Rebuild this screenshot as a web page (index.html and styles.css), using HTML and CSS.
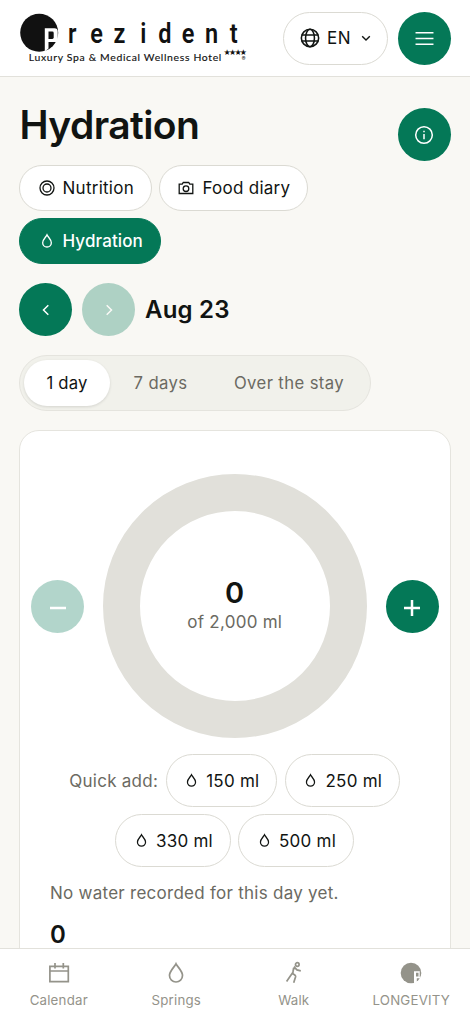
FILE: index.html
```html
<!DOCTYPE html>
<html lang="en">
<head>
<meta charset="utf-8">
<meta name="viewport" content="width=device-width, initial-scale=1">
<title>Hydration</title>
<link rel="stylesheet" href="styles.css">
</head>
<body>
<svg class="defs" width="0" height="0" aria-hidden="true">
  <symbol id="drop" viewBox="0 0 24 24"><path d="M12 2.800C10.500 6 5.500 9.900 5.500 14.500a6.500 6.500 0 0 0 13 0C18.500 9.900 13.500 6 12 2.800z"/></symbol>
</svg>
<header class="topbar">
  <svg class="logo" width="240" height="60" viewBox="10 5 240 60" role="img" aria-label="Prezident">
    <circle cx="39.200" cy="32.700" r="19"/>
    <path class="logo-cut" d="M44.800 28.200h9.700q3.200 0 3.200 3.200v7.500q0 3.200-3.200 3.200h-6v6.400l-3.700 3z"/>
    <path d="M48.500 31.500h3.800q1.400 0 1.400 1.400v4.600q0 1.400-1.400 1.400h-3.800z"/>
    <text class="logo-name" transform="scale(.84 1)" x="81 107.500 135 167 188.500 216.500 244 273.500" y="43.200">rezident</text>
    <text class="logo-tag" x="28.800" y="60.800" textLength="192.500" lengthAdjust="spacing">Luxury Spa &amp; Medical Wellness Hotel</text>
    <text class="logo-stars" x="223.500" y="55.400" textLength="23.500" lengthAdjust="spacing">★★★★</text>
    <text class="logo-reg" x="241.800" y="61.300">®</text>
  </svg>
  <button class="lang">
    <svg class="icon globe" viewBox="0 0 18 18"><circle cx="9" cy="9" r="7.800"/><ellipse cx="9" cy="9" rx="4" ry="7.800"/><path d="M1.500 6.300h15M1.500 11.700h15"/></svg>
    <span>EN</span>
    <svg class="icon chev" viewBox="0 0 10 10"><path d="M1.200 3.200 5 7l3.800-3.800"/></svg>
  </button>
  <button class="round">
    <svg class="icon menu" viewBox="0 0 18 14"><path d="M.5 1.500h17M.5 7h17M.5 12.500h17"/></svg>
  </button>
</header>
<main class="page">
  <div class="heading">
    <h1>Hydration</h1>
    <button class="round info"><svg class="icon" width="20" height="20" viewBox="0 0 20 20"><circle cx="10" cy="10" r="8.300"/><path d="M10 9v5.300M10 5.700v1.500"/></svg></button>
  </div>
  <nav class="tabs">
    <a class="tab"><svg class="icon" width="16" height="16" viewBox="0 0 16 16"><circle cx="8" cy="8" r="7"/><circle cx="8" cy="8" r="4"/></svg>Nutrition</a>
    <a class="tab"><svg class="icon" width="16" height="16" viewBox="0 0 16 16"><path d="M1.200 4.200h3L5.300 2.500h5.400l1.100 1.700h3v9.300H1.200z"/><circle cx="8" cy="8.700" r="2.800"/></svg>Food diary</a>
    <a class="tab active"><svg class="icon drop" width="16" height="16"><use href="#drop"/></svg>Hydration</a>
  </nav>
  <div class="daynav">
    <button class="round"><svg class="icon arrow" viewBox="0 0 12 12"><path d="M8.300 1.300 3.500 6l4.800 4.700"/></svg></button>
    <button class="round off"><svg class="icon arrow" viewBox="0 0 12 12"><path d="M3.700 1.300 8.500 6l-4.800 4.700"/></svg></button>
    <h2>Aug 23</h2>
  </div>
  <div class="range">
    <span class="seg on">1 day</span><span class="seg">7 days</span><span class="seg">Over the stay</span>
  </div>
  <section class="card">
    <div class="meter">
      <button class="round off"><svg class="icon sign" viewBox="0 0 16 16"><path d="M0 8h16"/></svg></button>
      <div class="ring"><strong>0</strong><span>of 2,000 ml</span></div>
      <button class="round"><svg class="icon sign" viewBox="0 0 16 16"><path d="M0 8h16M8 0v16"/></svg></button>
    </div>
    <div class="quick">
      <span class="label">Quick add:</span>
      <button class="chip"><svg class="icon drop" width="15" height="15"><use href="#drop"/></svg>150 ml</button>
      <button class="chip"><svg class="icon drop" width="15" height="15"><use href="#drop"/></svg>250 ml</button>
      <button class="chip"><svg class="icon drop" width="15" height="15"><use href="#drop"/></svg>330 ml</button>
      <button class="chip"><svg class="icon drop" width="15" height="15"><use href="#drop"/></svg>500 ml</button>
    </div>
    <p class="empty">No water recorded for this day yet.</p>
    <strong class="total">0</strong>
  </section>
</main>
<nav class="bottombar">
  <a><svg class="icon" width="24" height="24" viewBox="0 0 24 24"><path d="M2.900 5.300h18.400v15.400H2.900zM2.900 10h18.400M8 2v5.500M16.300 2v5.500"/></svg>Calendar</a>
  <a><svg class="icon" width="24" height="24"><use href="#drop"/></svg>Springs</a>
  <a><svg class="icon" width="24" height="24" viewBox="0 0 24 24"><circle cx="15.300" cy="3.500" r="1.800"/><path d="M18.800 9.800 15 8.900 12.500 6.300 10.800 10.500M11.600 6.800l-.8 5.700M4.600 20.500 8 15.500l2.300-3.300 3 2.300q.5.500.3 1.300l-1.900 6"/></svg>Walk</a>
  <a><svg width="24" height="24" viewBox="0 0 24 24"><circle cx="12" cy="12" r="10.300" fill="#94938a"/><path fill="#fff" d="M15 10.200h6.500v7h-3.700v4.600L15 22z"/><path fill="#94938a" d="M17 11.800h2.500v3.700H17zM20.700 10.200h1.300v4l-1.300 2z"/></svg>LONGEVITY</a>
</nav>
</body>
</html>
```
FILE: styles.css
```css
* { box-sizing: border-box; }
html, body { height: 100%; }
body {
  margin: 0;
  height: 1017px;
  display: flex;
  flex-direction: column;
  overflow: hidden;
  background: #f9f8f4;
  color: #111412;
  font-family: Inter, "Liberation Sans", sans-serif;
  font-size: 17px;
  letter-spacing: 0.26px;
}
button { font: inherit; letter-spacing: inherit; color: inherit; padding: 0; }
h1, h2, p { margin: 0; }
.defs { position: absolute; }
.icon { fill: none; stroke: currentColor; stroke-width: 1.5; flex: none; }
.tab .icon { stroke-width: 1.3; }
.icon.drop { stroke-width: 2; }

.topbar {
  flex: none;
  height: 77px;
  padding: 0 19px 0 10px;
  display: flex;
  align-items: center;
  background: #fff;
  border-bottom: 1px solid #e2e1db;
}
.logo { flex: none; margin: -7px auto 0 0; fill: #111; }
.logo-cut { fill: #fff; }
.logo-name { font: 600 28px Roboto, sans-serif; letter-spacing: 0; }
.logo-tag { font: 400 10.400px Lato, sans-serif; letter-spacing: 0; stroke: #111; stroke-width: 0.15px; }
.logo-stars { font: 8px "DejaVu Sans", sans-serif; letter-spacing: 0; }
.logo-reg { font: 5.500px Inter, sans-serif; letter-spacing: 0; }
.lang {
  width: 105px;
  height: 53px;
  margin-right: 10px;
  display: flex;
  align-items: center;
  padding-left: 16px;
  background: #fff;
  border: 1px solid #dbdad3;
  border-radius: 27px;
}
.lang span { margin: 0 10px 0 7px; font-size: 17px; letter-spacing: 0.5px; }
.globe { width: 20px; height: 20px; stroke-width: 1.4; }
.chev { width: 10px; height: 10px; stroke-width: 1.4; }
.menu { width: 19px; height: 15px; stroke-width: 1.5; }
.round {
  flex: none;
  width: 53px;
  height: 53px;
  display: grid;
  place-items: center;
  border: 0;
  border-radius: 50%;
  background: #047857;
  color: #fff;
}
.off { opacity: 0.3; }
.arrow { width: 12px; height: 12px; stroke-width: 1.5; }

.page { flex: 1; min-height: 0; overflow: hidden; padding: 24px 19.500px 0 19px; }
.heading { display: flex; justify-content: space-between; height: 64px; }
h1 { margin-left: 0.500px; font-size: 39px; line-height: 47px; font-weight: 600; letter-spacing: -0.6px; }
.info { margin-top: 7px; }
.tabs { display: flex; flex-wrap: wrap; gap: 7px 7px; width: 330px; }
.tab {
  height: 46px;
  display: flex;
  align-items: center;
  gap: 8px;
  padding: 0 17px 0 18.500px;
  background: #fff;
  border: 1px solid #dbdad3;
  border-radius: 23px;
}
.active { background: #047857; border-color: #047857; color: #fff; font-weight: 500; letter-spacing: 0.1px; }
.daynav { display: flex; align-items: center; gap: 10px; margin-top: 19px; }
h2 { font-size: 24px; font-weight: 600; letter-spacing: 0.2px; }
.range {
  display: flex;
  width: 352px;
  height: 56px;
  margin-top: 19px;
  padding: 4px;
  background: #f1f1eb;
  border: 1px solid #e5e4de;
  border-radius: 28px;
  color: #6b6a62;
}
.seg {
  flex: none;
  display: grid;
  place-items: center;
  padding: 0 23px 0 23.500px;
  border-radius: 23px;
  font-size: 16.700px;
  letter-spacing: 0.38px;
  white-space: nowrap;
}
.on { width: 86px; padding: 0; background: #fff; color: #111412; letter-spacing: 0.2px; box-shadow: 0 1px 3px rgba(0, 0, 0, 0.12); }

.card {
  height: 620px;
  margin-top: 19px;
  padding: 43px 11px 0;
  background: #fff;
  border: 1px solid #e5e4de;
  border-radius: 20px;
}
.meter { display: flex; align-items: center; justify-content: space-between; }
.ring {
  width: 264px;
  height: 264px;
  display: flex;
  flex-direction: column;
  align-items: center;
  justify-content: center;
  padding-bottom: 2px;
  border: 37px solid #e1e0da;
  border-radius: 50%;
}
.ring strong { font-size: 29px; line-height: 33px; font-weight: 600; }
.ring span { line-height: 26px; color: #6b6a62; }
.sign { width: 16px; height: 16px; margin-top: 4px; stroke-width: 2.500; }
.quick {
  display: flex;
  flex-wrap: wrap;
  justify-content: center;
  align-items: center;
  gap: 7px 7.500px;
  width: 352px;
  margin: 16px auto 0;
}
.label { color: #6b6a62; }
.chip {
  height: 53px;
  display: flex;
  align-items: center;
  gap: 7px;
  padding: 0 17px 0 17.500px;
  background: #fff;
  border: 1px solid #dbdad3;
  border-radius: 27px;
}
.empty { margin: 14px 0 0 19px; line-height: 24px; color: #6b6a62; }
.total { display: block; margin: 13px 0 0 19px; font-size: 24px; line-height: 34px; font-weight: 600; }

.bottombar {
  flex: none;
  height: 69px;
  display: grid;
  grid-template-columns: repeat(4, 1fr);
  background: #fff;
  border-top: 1px solid #e2e1db;
  color: #94938a;
  font-size: 13.300px;
  letter-spacing: 0.2px;
}
.bottombar .icon { stroke-width: 1.700; }
.bottombar a { display: flex; flex-direction: column; align-items: center; gap: 7px; padding-top: 12px; line-height: 16px; }
```
